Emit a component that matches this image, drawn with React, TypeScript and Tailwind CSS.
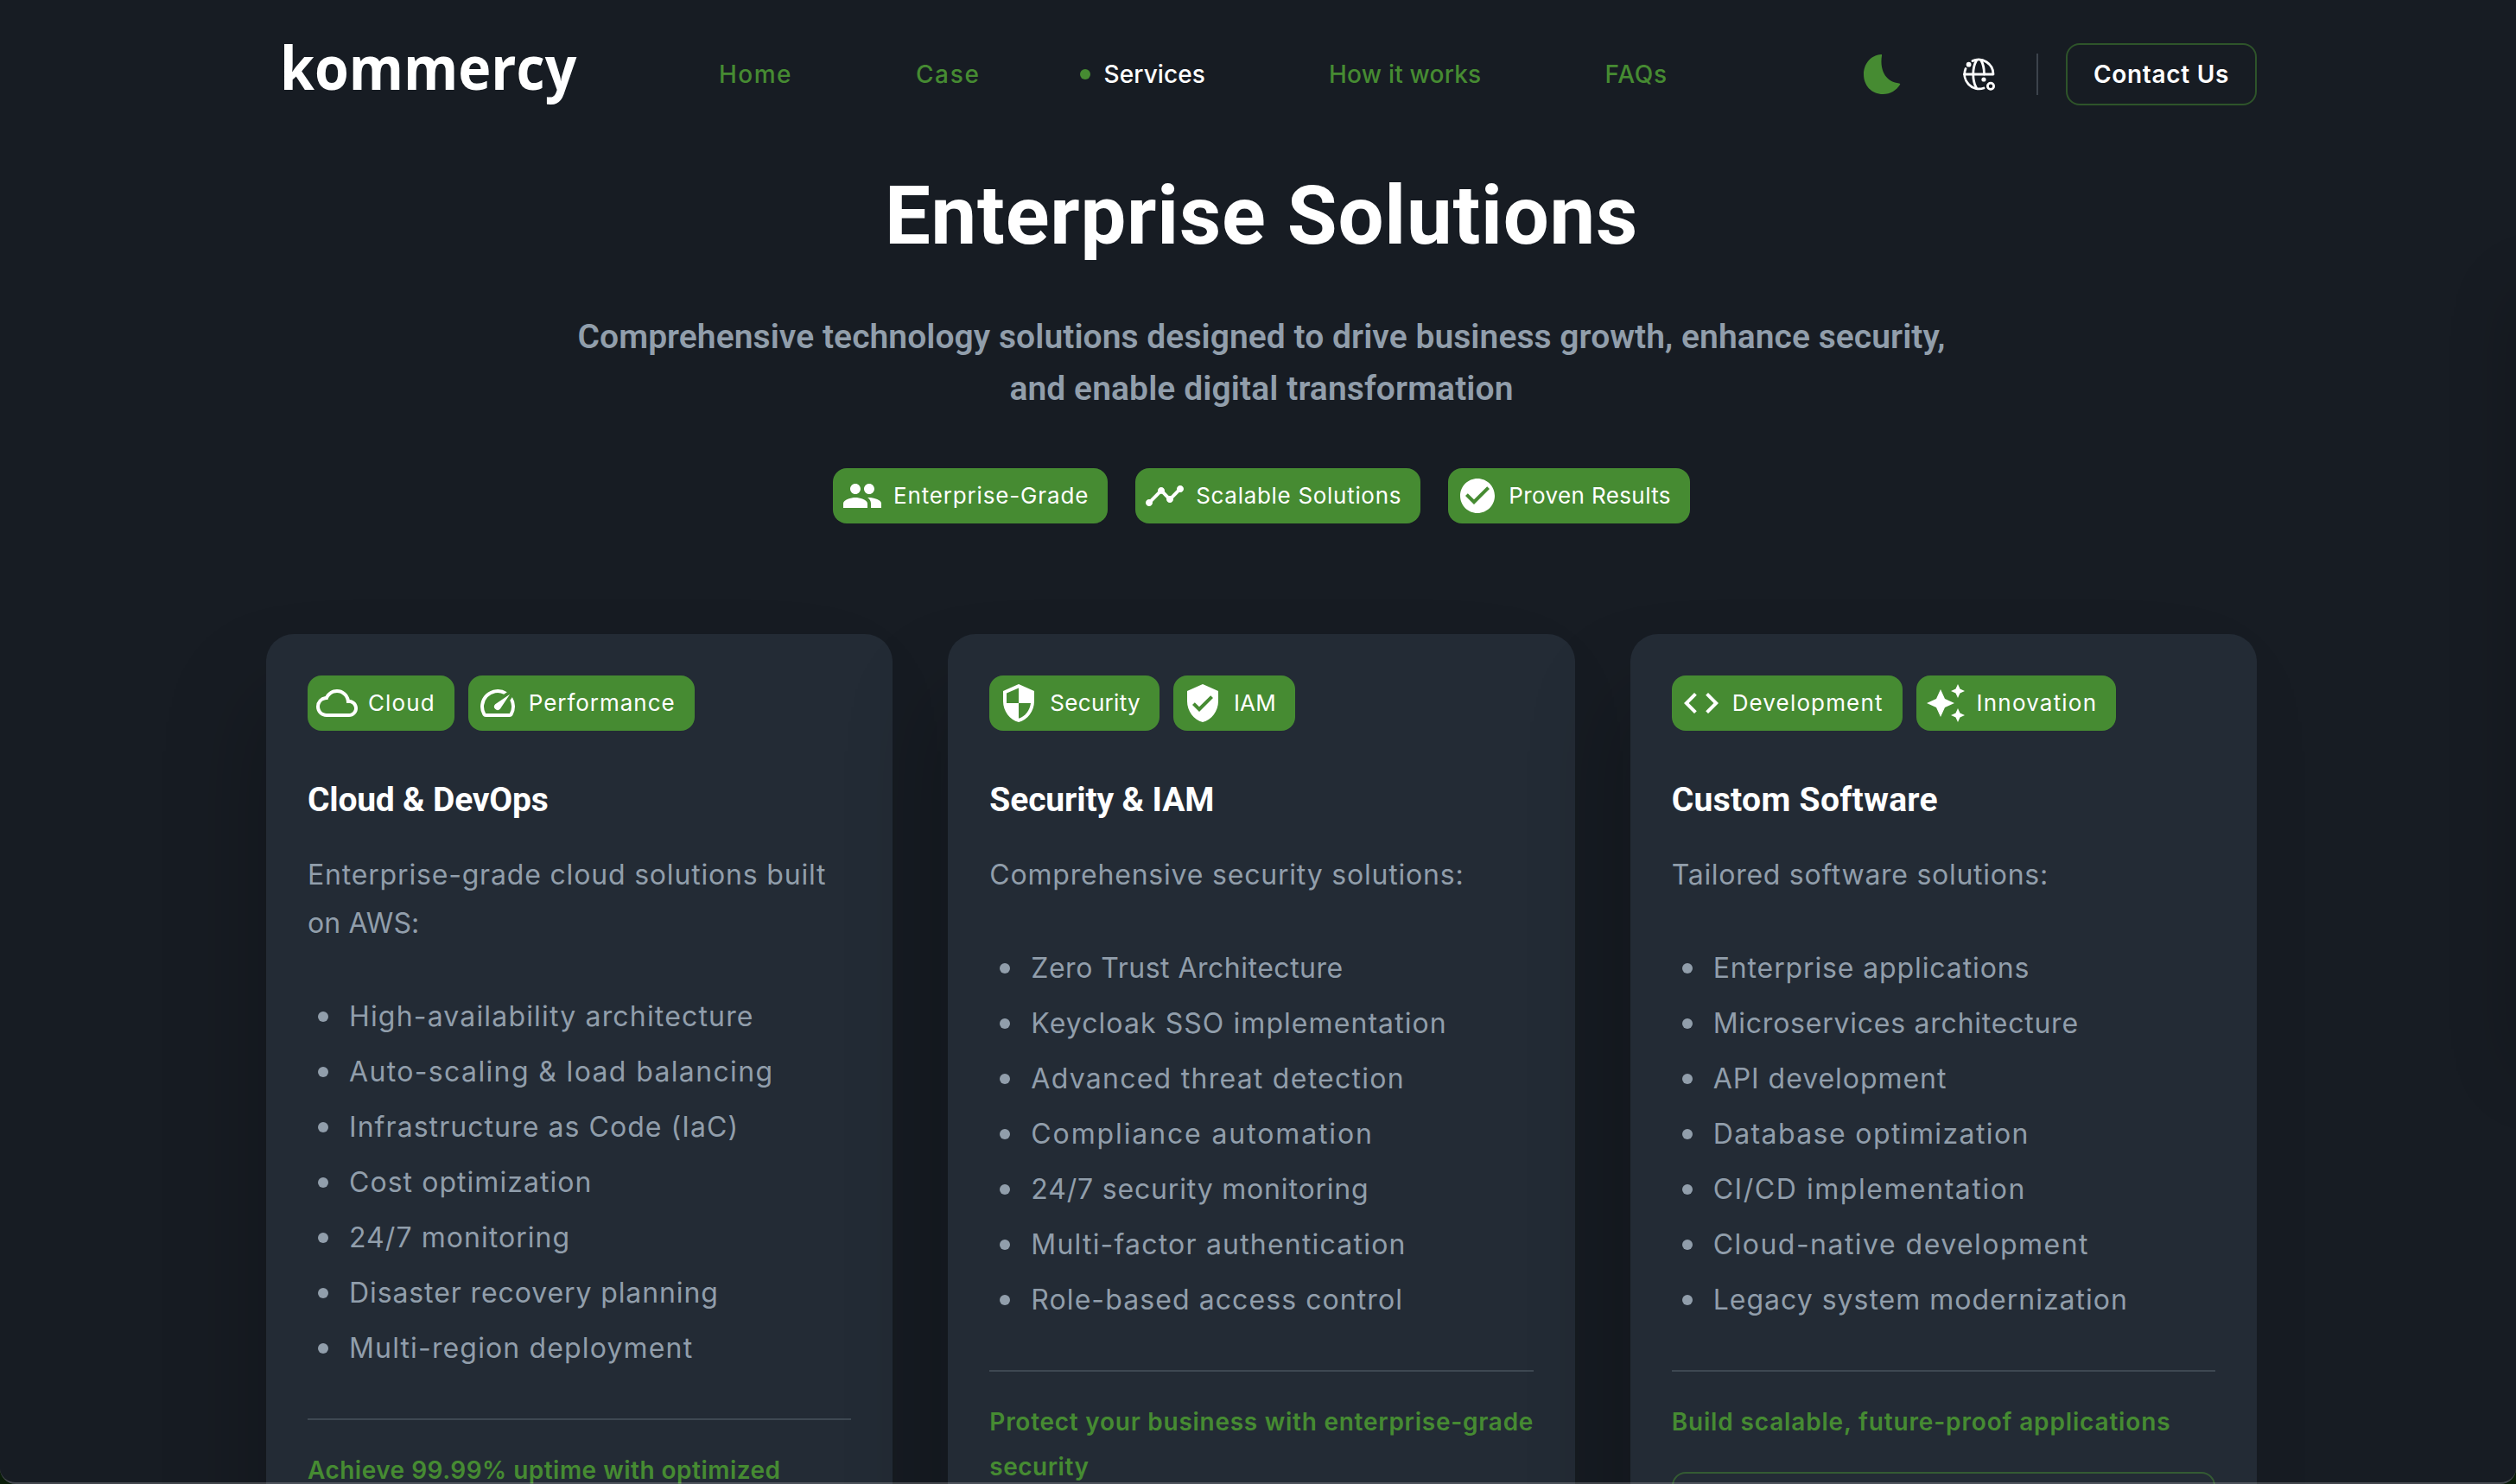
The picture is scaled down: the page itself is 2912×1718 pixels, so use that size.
import type { ReactNode } from 'react';
import type { IconType } from 'react-icons';
import {
  MdAutoAwesome,
  MdCheckCircle,
  MdCloudQueue,
  MdCode,
  MdPeople,
  MdSecurity,
  MdSpeed,
  MdTimeline,
  MdVerifiedUser,
} from 'react-icons/md';

type Label = { text: string; track: string };
type Tag = Label & { icon: IconType };
type Service = { tags: Tag[]; title: Label; intro: Label[]; items: Label[]; pitch: Label[] };

const navItems: (Label & { active?: boolean })[] = [
  { text: 'Home', track: 'tracking-[1.46px]' },
  { text: 'Case', track: 'tracking-[1.66px]' },
  { text: 'Services', track: 'tracking-[0.11px]', active: true },
  { text: 'How it works', track: 'tracking-[0.22px]' },
  { text: 'FAQs', track: 'tracking-[0.8px]' },
];

const highlights: Tag[] = [
  { text: 'Enterprise-Grade', track: 'tracking-[0.84px]', icon: MdPeople },
  { text: 'Scalable Solutions', track: 'tracking-[0.7px]', icon: MdTimeline },
  { text: 'Proven Results', track: 'tracking-[0.4px]', icon: MdCheckCircle },
];

const services: Service[] = [
  {
    tags: [
      { text: 'Cloud', track: 'tracking-[1.1px]', icon: MdCloudQueue },
      { text: 'Performance', track: 'tracking-[0.98px]', icon: MdSpeed },
    ],
    title: { text: 'Cloud & DevOps', track: 'tracking-[-0.21px]' },
    intro: [
      { text: 'Enterprise-grade cloud solutions built', track: 'tracking-[0.82px]' },
      { text: 'on AWS:', track: 'tracking-[0.1px]' },
    ],
    items: [
      { text: 'High-availability architecture', track: 'tracking-[1.17px]' },
      { text: 'Auto-scaling & load balancing', track: 'tracking-[1.36px]' },
      { text: 'Infrastructure as Code (IaC)', track: 'tracking-[1.06px]' },
      { text: 'Cost optimization', track: 'tracking-[1.05px]' },
      { text: '24/7 monitoring', track: 'tracking-[1.06px]' },
      { text: 'Disaster recovery planning', track: 'tracking-[0.9px]' },
      { text: 'Multi-region deployment', track: 'tracking-[1.15px]' },
    ],
    pitch: [
      { text: 'Achieve 99.99% uptime with optimized', track: 'tracking-[0.48px]' },
      { text: 'costs', track: 'tracking-[0.5px]' },
    ],
  },
  {
    tags: [
      { text: 'Security', track: 'tracking-[0.3px]', icon: MdSecurity },
      { text: 'IAM', track: 'tracking-[0.2px]', icon: MdVerifiedUser },
    ],
    title: { text: 'Security & IAM', track: 'tracking-[-0.13px]' },
    intro: [{ text: 'Comprehensive security solutions:', track: 'tracking-[0.8px]' }],
    items: [
      { text: 'Zero Trust Architecture', track: 'tracking-[0.5px]' },
      { text: 'Keycloak SSO implementation', track: 'tracking-[1.07px]' },
      { text: 'Advanced threat detection', track: 'tracking-[1.26px]' },
      { text: 'Compliance automation', track: 'tracking-[1.88px]' },
      { text: '24/7 security monitoring', track: 'tracking-[0.82px]' },
      { text: 'Multi-factor authentication', track: 'tracking-[1.2px]' },
      { text: 'Role-based access control', track: 'tracking-[1.08px]' },
    ],
    pitch: [
      { text: 'Protect your business with enterprise-grade', track: 'tracking-[0.74px]' },
      { text: 'security', track: 'tracking-[0.5px]' },
    ],
  },
  {
    tags: [
      { text: 'Development', track: 'tracking-[1.15px]', icon: MdCode },
      { text: 'Innovation', track: 'tracking-[1.2px]', icon: MdAutoAwesome },
    ],
    title: { text: 'Custom Software', track: 'tracking-[0.34px]' },
    intro: [{ text: 'Tailored software solutions:', track: 'tracking-[0.72px]' }],
    items: [
      { text: 'Enterprise applications', track: 'tracking-[0.88px]' },
      { text: 'Microservices architecture', track: 'tracking-[0.76px]' },
      { text: 'API development', track: 'tracking-[0.96px]' },
      { text: 'Database optimization', track: 'tracking-[1.4px]' },
      { text: 'CI/CD implementation', track: 'tracking-[1.55px]' },
      { text: 'Cloud-native development', track: 'tracking-[1.48px]' },
      { text: 'Legacy system modernization', track: 'tracking-[1px]' },
    ],
    pitch: [{ text: 'Build scalable, future-proof applications', track: 'tracking-[0.84px]' }],
  },
];

function Lines({ lines }: { lines: Label[] }) {
  return (
    <>
      {lines.map(l => (
        <span key={l.text} className={`block whitespace-nowrap ${l.track}`}>{l.text}</span>
      ))}
    </>
  );
}

function Chip({ tag }: { tag: Tag }) {
  const Icon = tag.icon;
  return (
    <span className="flex h-16 items-center gap-3 rounded-2xl bg-[#468b32] pr-[22px] pl-[10px] text-[26px] whitespace-nowrap text-white">
      <Icon className="size-12 shrink-0" />
      <span className={`pb-0.5 ${tag.track}`}>{tag.text}</span>
    </span>
  );
}

function MoonIcon() {
  return (
    <svg viewBox="0 0 48 48" className="size-12 text-[#468b32]" fill="currentColor">
      <path d="M23.5 1C10 2 3 13 3 24c0 13 9 23 22.500 23C34 47 41 42.500 45 36c.6-1 0-1.500-1-1.600C31 33.500 21 22 24 2.500c.1-1 0-1.500-.5-1.500z" />
    </svg>
  );
}

function LanguageIcon() {
  return (
    <svg viewBox="0 0 48 48" className="size-12 text-white" fill="none" stroke="currentColor" strokeWidth="2.800" strokeLinecap="round" strokeLinejoin="round">
      <path d="M17 8.600A17 17 0 0 1 41 24H7.500" />
      <path d="M9 17.500A17 17 0 0 0 30 40" />
      <path d="M21.500 8c-5 9-5 23 0 32M27 8c2.600 5 3.600 10 3.400 16" />
      <circle cx="12.600" cy="12.700" r="2.900" fill="currentColor" stroke="none" />
      <circle cx="30" cy="30" r="2.600" fill="currentColor" stroke="none" />
      <circle cx="38" cy="37.700" r="3.600" />
    </svg>
  );
}

function Header() {
  return (
    <header className="flex h-[172px] items-center text-[28px]">
      <div className="ml-4 w-[508px] pb-[18px]">
        <span className="block w-max origin-left scale-x-[0.92] font-['Open_Sans',sans-serif] text-[70px] leading-none font-bold text-white">kommercy</span>
      </div>
      <nav className="flex w-[1322px] gap-[143px] font-medium">
        {navItems.map(item => (
          <a key={item.text} className={`relative whitespace-nowrap ${item.track} ${item.active ? 'text-white' : 'text-[#468b32]'}`}>
            {item.active && <span className="absolute top-1/2 -left-7 size-3 -translate-y-1/2 rounded-full bg-[#468b32]" />}
            {item.text}
          </a>
        ))}
      </nav>
      <MoonIcon />
      <div className="ml-16"><LanguageIcon /></div>
      <div className="ml-[43px] h-12 w-0.5 bg-[#919eab]/30" />
      <button className="ml-8 h-[72px] w-[221px] rounded-2xl border-2 border-[#468b32]/50 font-semibold tracking-[0.69px] whitespace-nowrap text-white">Contact Us</button>
    </header>
  );
}

function Card({ children }: { children: ReactNode }) {
  return (
    <article className="rounded-[32px] bg-[#232b35] px-12 pt-12 pb-16 shadow-[-32px_48px_112px_-24px_rgba(0,0,0,0.22)]">
      {children}
    </article>
  );
}

function ServiceCard({ service }: { service: Service }) {
  return (
    <Card>
      <div className="flex gap-4">
        {service.tags.map(tag => <Chip key={tag.text} tag={tag} />)}
      </div>
      <h3 className={`mt-[50px] font-['Roboto',sans-serif] text-[39px] leading-[60px] font-bold text-white ${service.title.track}`}>{service.title.text}</h3>
      <p className="mt-[29px] text-[32px] leading-[56px]"><Lines lines={service.intro} /></p>
      <ul className="mt-12 text-[32px] leading-[64px]">
        {service.items.map(item => (
          <li key={item.text} className="flex items-center whitespace-nowrap">
            <span className="mr-6 ml-3 size-3 rounded-full bg-[#919eab]" />
            <span className={item.track}>{item.text}</span>
          </li>
        ))}
      </ul>
      <hr className="mt-[49px] border-t-2 border-[#919eab]/25" />
      <p className="mt-8 text-[28px] leading-[52px] font-semibold text-[#468b32]"><Lines lines={service.pitch} /></p>
      <button className="mt-8 h-24 w-full rounded-2xl border-2 border-[#468b32]/50 text-[28px] font-semibold text-white">Learn More</button>
    </Card>
  );
}

export default function App() {
  return (
    <div className="relative h-[1718px] overflow-hidden bg-[#171c23] font-['Inter',sans-serif] text-[#919eab]">
      <div className="mx-auto w-[2304px] translate-x-1">
        <Header />
        <section className="flex flex-col items-center pt-[18px] text-center">
          <h1 className="font-['Roboto',sans-serif] text-[94px] leading-[120px] font-bold tracking-[0.79px] text-white">Enterprise Solutions</h1>
          <h2 className="mt-[50px] font-['Roboto',sans-serif] text-[39px] leading-[60px] font-semibold whitespace-nowrap">
            <span className="block tracking-[0.05px]">Comprehensive technology solutions designed to drive business growth, enhance security,</span>
            <span className="block tracking-[0.09px]">and enable digital transformation</span>
          </h2>
          <div className="mt-[62px] flex gap-8">
            {highlights.map(tag => <Chip key={tag.text} tag={tag} />)}
          </div>
        </section>
        <section className="mt-32 grid grid-cols-3 items-start gap-16">
          {services.map(service => <ServiceCard key={service.title.text} service={service} />)}
        </section>
      </div>

      <div className="absolute top-[340px] left-full h-[900px] w-40 shadow-[0_0_80px_rgba(0,0,0,0.2)]" />
      {/* window frame */}
      <div className="pointer-events-none absolute inset-0 rounded-b-[18px] border-b-2 border-white/20 shadow-[0_0_0_30px_#0a1d09]" />
    </div>
  );
}
